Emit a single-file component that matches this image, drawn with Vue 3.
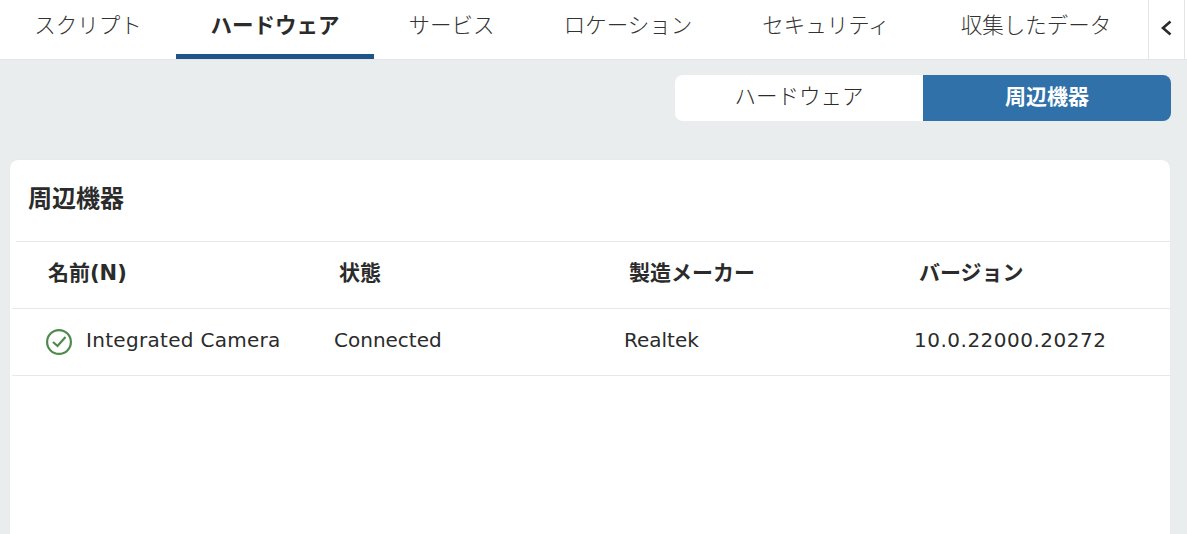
<template>
  <div class="page">
    <div class="tabbar">
      <div
        v-for="tab in tabs"
        :key="tab"
        class="tab"
        :class="{ active: tab === activeTab }"
      >{{ tab }}</div>
      <div class="scroll-btn">
        <svg width="14" height="16" viewBox="0 0 14 16">
          <path d="M10.5 1.5 L3 8 L10.5 14.5" fill="none" stroke="#2b2b2b" stroke-width="2.6" />
        </svg>
      </div>
    </div>

    <div class="toolbar">
      <div class="segment">
        <div class="seg-item">ハードウェア</div>
        <div class="seg-item selected">周辺機器</div>
      </div>
    </div>

    <div class="card">
      <div class="card-title">周辺機器</div>
      <div class="table">
        <div class="row head">
          <div v-for="col in columns" :key="col" class="th">{{ col }}</div>
        </div>
        <div v-for="item in devices" :key="item.name" class="row">
          <div class="td name">
            <svg class="status" width="28" height="28" viewBox="0 0 28 28">
              <circle cx="14" cy="14" r="11.9" fill="none" stroke="#4f8a4c" stroke-width="2.2" />
              <path d="M8 14 L12.5 18 L20.5 9" fill="none" stroke="#4f8a4c" stroke-width="2.2" />
            </svg>
            <span>{{ item.name }}</span>
          </div>
          <div class="td">{{ item.state }}</div>
          <div class="td">{{ item.maker }}</div>
          <div class="td version">{{ item.version }}</div>
        </div>
      </div>
    </div>
  </div>
</template>

<script setup>
const tabs = ['スクリプト', 'ハードウェア', 'サービス', 'ロケーション', 'セキュリティ', '収集したデータ'];
const activeTab = 'ハードウェア';
const columns = ['名前(N)', '状態', '製造メーカー', 'バージョン'];
const devices = [
  { name: 'Integrated Camera', state: 'Connected', maker: 'Realtek', version: '10.0.22000.20272' }
];
</script>

<style>
html,
body {
  margin: 0;
  background: #e9edee;
  overflow: hidden;
}
</style>

<style scoped>
.page {
  width: 1187px;
  height: 534px;
  overflow: hidden;
  background: #e9edee;
  color: #2b2b2b;
  font-family: "DejaVu Sans", "Noto Sans CJK JP", sans-serif;
}

.tabbar {
  display: grid;
  grid-template-columns: 176px 198px 155px 198px 198px 222px 1px 37px;
  height: 59px;
  background: #fff;
  border-bottom: 1px solid #e2e4e5;
}

.tab {
  height: 54px;
  margin-bottom: -1px;
  text-align: center;
  font-size: 21.5px;
  font-weight: 300;
  line-height: 51px;
  color: #333;
  border-bottom: 5px solid transparent;
  white-space: nowrap;
}

.tab.active {
  font-weight: 700;
  color: #2b2b2b;
  border-bottom-color: #1f5487;
}

.scroll-btn {
  grid-column: 8;
  box-sizing: border-box;
  display: flex;
  align-items: center;
  justify-content: center;
  padding-bottom: 3px;
  border-left: 1px solid #e2e4e5;
  border-right: 1px solid #e2e4e5;
}

.toolbar {
  display: flex;
  justify-content: flex-end;
  padding: 15px 16px 0 0;
}

.segment {
  display: flex;
  width: 496px;
  height: 46px;
  border-radius: 8px;
  overflow: hidden;
  background: #fff;
}

.seg-item {
  flex: 1;
  text-align: center;
  font-size: 21.5px;
  font-weight: 300;
  line-height: 44px;
}

.seg-item.selected {
  background: #2f71a8;
  color: #fff;
  font-size: 21px;
  font-weight: 700;
}

.card {
  margin: 39px 17px 0 10px;
  height: 400px;
  padding-left: 2px;
  background: #fff;
  border-radius: 8px;
  box-shadow: 0 0 1px #d5d9da;
}

.card-title {
  height: 81px;
  padding-left: 16px;
  font-size: 24px;
  font-weight: 700;
  line-height: 78px;
  color: #2b2b2b;
}

.row {
  display: grid;
  grid-template-columns: 322px 290px 290px 1fr;
  height: 66px;
  align-items: center;
  border-top: 1px solid #e6e8e9;
}

.row.head {
  grid-template-columns: 291px 290px 290px 1fr;
  margin-left: 4px;
  padding-left: 32px;
}

.row:last-child {
  border-bottom: 1px solid #e6e8e9;
}

.th {
  padding-bottom: 8px;
  font-size: 21px;
  font-weight: 700;
}

.td {
  padding-bottom: 5px;
  font-size: 20px;
}

.name {
  display: flex;
  align-items: center;
  gap: 13px;
  padding-left: 33px;
  letter-spacing: 0.3px;
}

.version {
  letter-spacing: 0.5px;
}

.status {
  position: relative;
  top: 2px;
}
</style>
